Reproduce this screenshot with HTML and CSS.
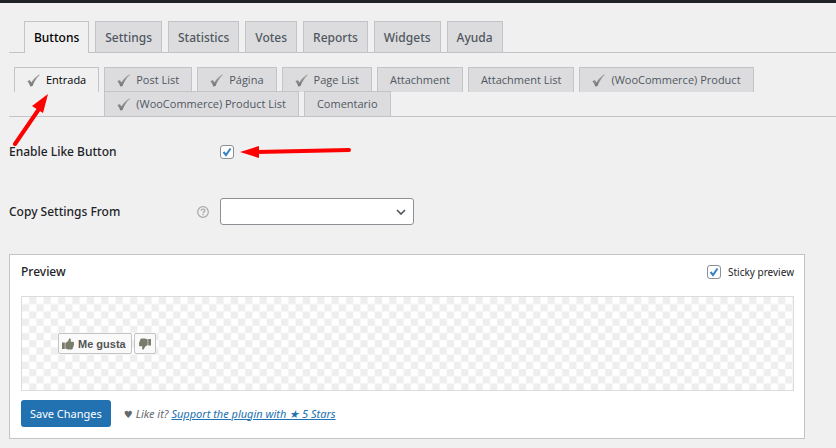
FILE: index.html
```html
<!DOCTYPE html>
<html lang="es">
<head>
<meta charset="utf-8">
<title>Buttons</title>
<link rel="stylesheet" href="styles.css">
</head>
<body>
<svg class="defs" aria-hidden="true">
  <defs>
    <linearGradient id="tickfill" x1="0" y1="0" x2="0" y2="1"><stop offset="0" stop-color="#a8a8a8"/><stop offset="1" stop-color="#747474"/></linearGradient>
    <symbol id="tick" viewBox="0 0 13 13"><path fill="url(#tickfill)" d="M.3 7.2 2.8 6 4.500 8.500C6.300 5.300 9 2.300 12.400.3L12.800 1C9.500 4 7.300 7.500 5.500 12L3.300 12.500C2.700 10.200 1.600 8.500.3 7.200Z"/></symbol>
  </defs>
</svg>
<div class="adminbar"></div>
<main class="wrap">
  <nav class="tabs">
    <a class="tab active" href="#">Buttons</a>
    <a class="tab" href="#">Settings</a>
    <a class="tab" href="#">Statistics</a>
    <a class="tab" href="#">Votes</a>
    <a class="tab" href="#">Reports</a>
    <a class="tab" href="#">Widgets</a>
    <a class="tab" href="#">Ayuda</a>
  </nav>
  <nav class="subtabs">
    <a class="subtab active" href="#"><svg class="tick"><use href="#tick"/></svg>Entrada</a>
    <div class="subtab-group">
      <a class="subtab" href="#"><svg class="tick"><use href="#tick"/></svg>Post List</a>
      <a class="subtab" href="#"><svg class="tick"><use href="#tick"/></svg>Página</a>
      <a class="subtab" href="#"><svg class="tick"><use href="#tick"/></svg>Page List</a>
      <a class="subtab" href="#">Attachment</a>
      <a class="subtab" href="#">Attachment List</a>
      <a class="subtab" href="#"><svg class="tick"><use href="#tick"/></svg>(WooCommerce) Product</a>
      <a class="subtab" href="#"><svg class="tick"><use href="#tick"/></svg>(WooCommerce) Product List</a>
      <a class="subtab" href="#">Comentario</a>
    </div>
  </nav>
  <form>
    <div class="row">
      <label class="row-label" for="enable">Enable Like Button</label>
      <input class="check" type="checkbox" id="enable" checked>
    </div>
    <div class="row row-select">
      <label class="row-label" for="copy">Copy Settings From</label>
      <svg class="help" viewBox="0 0 12 12"><circle cx="6" cy="6" r="5.300" fill="none" stroke="#a9a9a9" stroke-width="1.200"/><path d="M4.200 4.700C4.200 2.500 7.900 2.500 7.900 4.600 7.900 5.900 6.100 5.800 6.100 7.200M6.100 8.100V9.300" fill="none" stroke="#a9a9a9" stroke-width="1.300"/></svg>
      <select class="select" id="copy"><option></option></select>
    </div>
    <section class="card">
      <header class="card-head">
        <h2 class="card-title">Preview</h2>
        <label class="sticky"><input class="check" type="checkbox" checked>Sticky preview</label>
      </header>
      <div class="preview">
        <button class="vote" type="button"><svg class="thumb" viewBox="0 0 12 12"><path d="M0 4.500H2.800V11H0ZM3.300 5 6 3.300 7.200.5C8.800.2 9.400 1.500 8.600 3.800H11.300C12.200 4.200 12.100 5.100 11.800 5.500 12.200 6.200 12 7 11.600 7.400 11.900 8 11.600 8.800 11 9 11 10.400 10.500 11.400 9.500 11.400H6L3.300 10.600Z"/></svg>Me gusta</button>
        <button class="vote" type="button" aria-label="No me gusta"><svg class="thumb" viewBox="0 0 12 12"><path transform="rotate(180 6 6)" d="M0 4.500H2.800V11H0ZM3.300 5 6 3.300 7.200.5C8.800.2 9.400 1.500 8.600 3.800H11.300C12.200 4.200 12.100 5.100 11.800 5.500 12.200 6.200 12 7 11.600 7.400 11.900 8 11.600 8.800 11 9 11 10.400 10.500 11.400 9.500 11.400H6L3.300 10.600Z"/></svg></button>
      </div>
      <footer class="card-foot">
        <button class="save" type="submit">Save Changes</button>
        <em class="like"><span class="heart">♥</span> Like it? <a href="#">Support the plugin with ★ 5 Stars</a></em>
      </footer>
    </section>
  </form>
  <svg class="arrow arrow-tab" viewBox="0 0 38 54"><path d="M3 52 27 17" stroke="red" stroke-width="4" stroke-linecap="round"/><path fill="red" d="M36 2 31 21 20 14Z"/></svg>
  <svg class="arrow arrow-check" viewBox="0 0 114 14"><path d="M18 7 110 5" stroke="red" stroke-width="4" stroke-linecap="round"/><path fill="red" d="M1 7 20 1V13Z"/></svg>
</main>
</body>
</html>
```
FILE: styles.css
```css
* { box-sizing: border-box; }
body {
  margin: 0;
  background: #f0f0f1;
  color: #1d2327;
  font: 12px/18px "Noto Sans", sans-serif;
}
.defs { position: absolute; width: 0; height: 0; }
.adminbar { height: 3px; background: #1d2327; }
.wrap { position: relative; padding: 18px 0 0 9px; }
.tabs {
  display: flex;
  gap: 6px;
  padding-left: 15px;
  border-bottom: 1px solid #c3c4c7;
}
.tab {
  padding: 6px 9px 4px;
  border: 1px solid #c3c4c7;
  border-bottom: 0;
  background: #dcdcde;
  color: #50575e;
  line-height: 20px;
  font-weight: 500;
  text-decoration: none;
}
.tab.active, .subtab.active { background: #f0f0f1; color: #000; }
.tab.active { margin-bottom: -1px; }
.subtabs {
  display: flex;
  align-items: flex-start;
  gap: 5px;
  margin-top: 14px;
  padding: 0 0 1px 5px;
  border-bottom: 1px solid #c3c4c7;
}
.subtab-group { display: flex; flex: 1; flex-wrap: wrap; column-gap: 5px; }
.subtab {
  display: flex;
  align-items: center;
  height: 25px;
  margin-bottom: -1px;
  padding: 0 12px;
  border: 1px solid #c3c4c7;
  border-bottom: 0;
  background: #dcdcde;
  color: #50575e;
  font-family: "Open Sans", sans-serif;
  font-size: 11px;
  font-weight: 500;
  text-decoration: none;
}
.tick { width: 13px; height: 13px; margin-right: 6px; }
.row { display: flex; align-items: center; height: 30px; margin-top: 20px; }
.row-select { height: 29px; margin-top: 30px; }
.row-label { width: 211px; font-weight: 500; }
.check {
  appearance: none;
  width: 14px;
  height: 14px;
  margin: 0;
  border: 1px solid #8c8f94;
  border-radius: 3px;
  background: #fff url("data:image/svg+xml,%3Csvg xmlns='http://www.w3.org/2000/svg' viewBox='0 0 12 12'%3E%3Cpath d='M2.500 6 5 9 9.500 2.500' fill='none' stroke='%233582c4' stroke-width='2'/%3E%3C/svg%3E");
}
.row-select .row-label { width: 188px; }
.help { width: 12px; height: 12px; margin-right: 11px; }
.select {
  appearance: none;
  width: 194px;
  height: 27px;
  border: 1px solid #8c8f94;
  border-radius: 3px;
  background: #fff url("data:image/svg+xml,%3Csvg xmlns='http://www.w3.org/2000/svg' viewBox='0 0 10 6'%3E%3Cpath d='M1 1 5 5 9 1' fill='none' stroke='%2350575e' stroke-width='1.700'/%3E%3C/svg%3E") no-repeat right 7px center / 10px 6px;
}
.card {
  margin: 28px 31px 0 0;
  padding: 8px 10px 11px 11px;
  border: 1px solid #c3c4c7;
  background: #fff;
}
.card-head { display: flex; justify-content: space-between; align-items: center; }
.card-title { margin: 0; font-size: 12px; line-height: 18px; font-weight: 500; }
.sticky { display: flex; align-items: center; gap: 7px; font-size: 10px; }
.preview {
  display: flex;
  align-items: center;
  gap: 2px;
  height: 95px;
  margin-top: 15px;
  padding-left: 36px;
  border: 1px solid #dcdcde;
  background: url("data:image/svg+xml,%3Csvg xmlns='http://www.w3.org/2000/svg' viewBox='0 0 10 10'%3E%3Cdefs%3E%3Cpattern id='c' width='2' height='2' patternUnits='userSpaceOnUse'%3E%3Cpath fill='%23eee' d='M1 0h1v1h-1zM0 1h1v1h-1z'/%3E%3C/pattern%3E%3C/defs%3E%3Cpath fill='url(%23c)' d='M0 0h10v10h-10z'/%3E%3C/svg%3E") 0 0 / 72px 72px;
}
.vote {
  display: flex;
  align-items: center;
  gap: 4px;
  height: 21px;
  padding: 0 5px 0 3px;
  border: 1px solid #c4c4c4;
  border-radius: 2px;
  background: #fafafa;
  color: #555;
  font: bold 11px "Liberation Sans", sans-serif;
}
.vote:last-child { padding: 0 4px; }
.thumb { width: 12px; height: 12px; fill: #7b7b6b; }
.card-foot { display: flex; align-items: center; gap: 13px; margin-top: 9px; }
.save {
  height: 27px;
  padding: 0 9px;
  border: 0;
  border-radius: 3px;
  background: #2271b1;
  color: #fff;
  font: 11px "Noto Sans", sans-serif;
}
.like { color: #646970; font-size: 11px; }
.heart { font: 10px "DejaVu Sans", sans-serif; }
.like a { color: #2271b1; }
.arrow { position: absolute; fill: none; }
.arrow-tab { left: 12px; top: 89px; width: 38px; height: 54px; }
.arrow-check { left: 239px; top: 142px; width: 114px; height: 14px; }
```
